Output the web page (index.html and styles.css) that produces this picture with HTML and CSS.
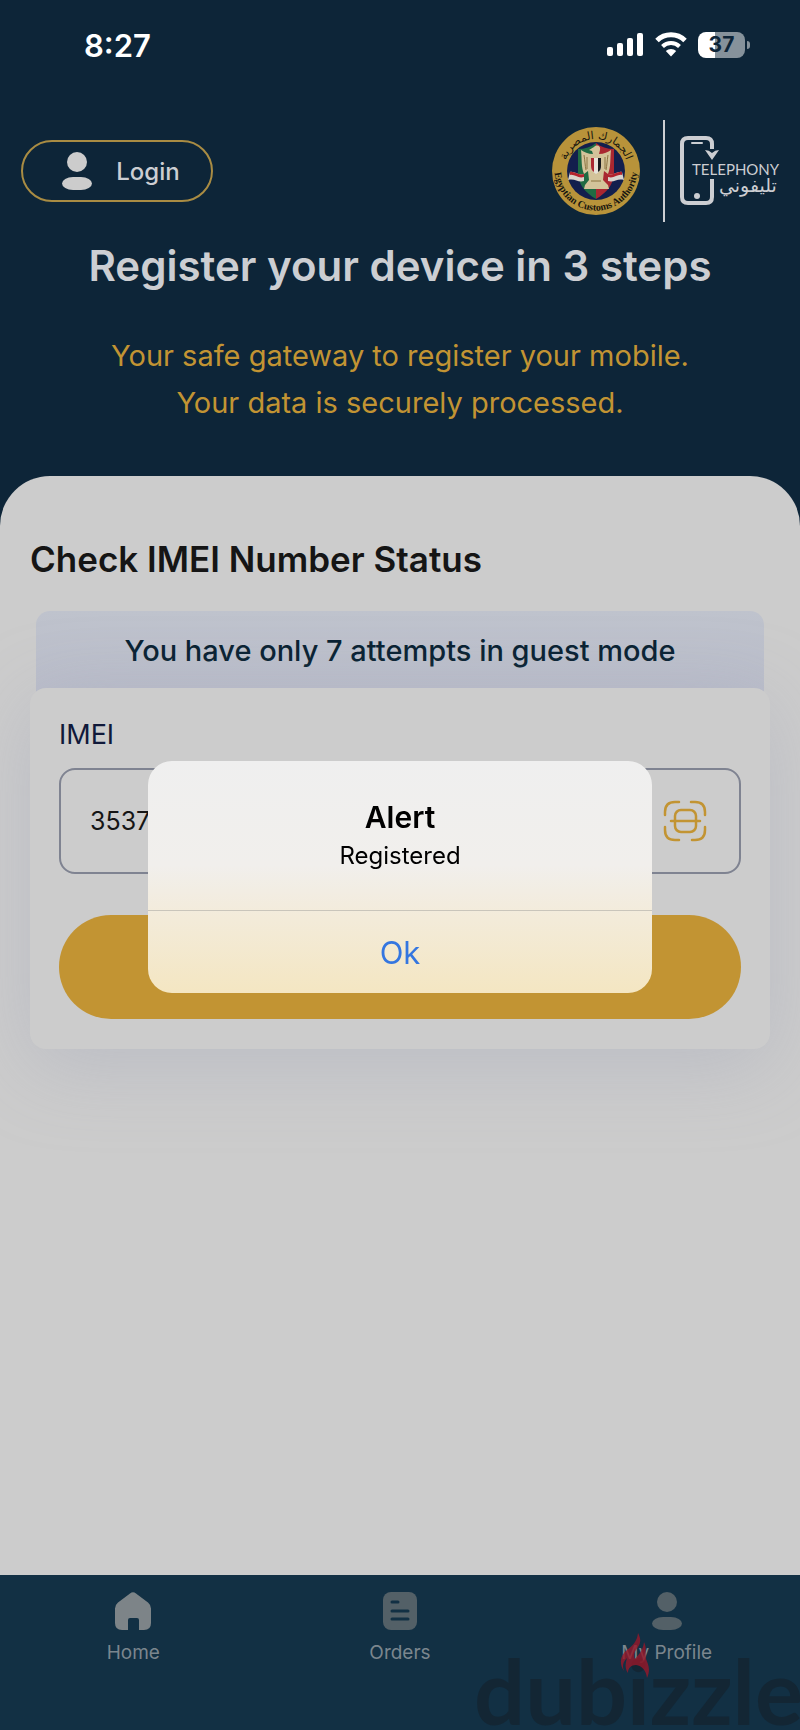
FILE: index.html
```
<!DOCTYPE html>
<html lang="en">
<head>
    <meta charset="UTF-8">
    <meta name="viewport" content="width=device-width, initial-scale=1.0">
    <title>Telephony - Check IMEI</title>
    <link rel="stylesheet" href="styles.css">
</head>
<body>
    <div class="status-bar">
        <span class="time">8:27</span>
        <div class="status-icons">
            <svg width="38" height="26" viewBox="0 0 38 26" fill="#fff" aria-hidden="true">
                <rect x="1" y="15" width="6" height="9" rx="2"/>
                <rect x="11" y="11" width="6" height="13" rx="2"/>
                <rect x="21" y="6" width="6" height="18" rx="2"/>
                <rect x="31" y="1" width="6" height="23" rx="2"/>
            </svg>
            <svg width="32" height="26" viewBox="0 0 32 26" aria-hidden="true">
                <path d="M2 8.5a20 20 0 0 1 28 0" fill="none" stroke="#fff" stroke-width="5"/>
                <path d="M7.5 14.5a12 12 0 0 1 17 0" fill="none" stroke="#fff" stroke-width="4"/>
                <path d="M10.800 19a7.500 7.500 0 0 1 10.400 0L16 24.500z" fill="#fff"/>
            </svg>
            <div class="battery"><span>37</span></div>
        </div>
    </div>

    <header class="header">
        <div class="top-row">
            <button class="login" type="button">
                <svg width="30" height="38" viewBox="0 0 30 38" fill="#ccc" aria-hidden="true">
                    <circle cx="15" cy="10" r="10"/>
                    <rect x="0" y="25" width="30" height="13" rx="11" ry="6.500"/>
                </svg>
                Login
            </button>
            <div class="logos">
                <svg class="seal" width="90" height="90" viewBox="0 0 90 90" role="img" aria-label="Egyptian Customs Authority">
                    <defs>
                        <path id="arcTop" d="M13 45a32 32 0 0 1 64 0"/>
                        <path id="arcBottom" d="M5 32A41.500 41.500 0 1 0 85 32"/>
                    </defs>
                    <circle cx="45" cy="45" r="44" fill="#b8933a"/>
                    <circle cx="45" cy="45" r="29" fill="#131f4d"/>
                    <path d="M45 17c-5 4-11 6-18 6v23c0 13 8 21 18 27z" fill="#1f6b43"/>
                    <path d="M45 17c5 4 11 6 18 6v23c0 13-8 21-18 27z" fill="#a92731"/>
                    <path d="M19 46c5-1 8 4 14 2v7c-6 2-9-3-16-1z" fill="#d9d4cc"/>
                    <path d="M71 46c-5-1-8 4-14 2v7c6 2 9-3 16-1z" fill="#d9d4cc"/>
                    <path d="M19 46c5-1 8 4 14 2v3c-6 2-9-3-14-2zM71 46c-5-1-8 4-14 2v3c6 2 9-3 14-2z" fill="#b3232d"/>
                    <path d="M43 21c3-3 7-1 6 3l-1 4c5 0 9-2 12-4-1 9 0 17-3 24l-4-3-1 9 5 5 1 4H33l1-4 4-5-1-9-4 3c-3-7-2-15-3-24 3 2 7 4 12 4l-1-3-3-1z" fill="#d3c39a"/>
                    <path d="M33 29c1 6 1 10 2 15M36 31v12M57 29c-1 6-1 10-2 15M54 31v12M40 55h10" stroke="#8b7440" fill="none"/>
                    <path d="M40 32h10v8c0 4-2 6-5 8-3-2-5-4-5-8z" fill="#e7e2da"/>
                    <path d="M40 32h3v14c-2-1-3-3-3-6z" fill="#a92731"/>
                    <path d="M47 32h3v8c0 3-1 5-3 6z" fill="#17191d"/>
                    <text class="seal-arabic"><textPath href="#arcTop" startOffset="50%" text-anchor="middle">الجمارك المصرية</textPath></text>
                    <text class="seal-latin"><textPath href="#arcBottom" startOffset="50%" text-anchor="middle">Egyptian Customs Authority</textPath></text>
                </svg>
                <span class="divider"></span>
                <svg class="telephony" width="100" height="70" viewBox="0 0 100 70" role="img" aria-label="Telephony">
                    <g fill="none" stroke="#ccced2" stroke-width="4">
                        <path d="M32 13V8q0-6-6-6H8Q2 2 2 8v53q0 6 6 6h18q6 0 6-6V43"/>
                        <path d="M12 7h10" stroke-width="2" stroke-linecap="round"/>
                    </g>
                    <path d="M25 14q4 0 7 3 3-3 7-3l-7 10z" fill="#ccced2"/>
                    <circle cx="17" cy="60" r="3" fill="#ccced2"/>
                    <text x="12" y="39" class="brand-latin">TELEPHONY</text>
                    <text x="39" y="56" class="brand-arabic">تليفوني</text>
                </svg>
            </div>
        </div>
        <h1>Register your device in 3 steps</h1>
        <p class="tagline">Your safe gateway to register your mobile.<br>Your data is securely processed.</p>
    </header>

    <main class="sheet">
        <h2>Check IMEI Number Status</h2>
        <p class="notice">You have only 7 attempts in guest mode</p>
        <form class="card">
            <label for="imei">IMEI</label>
            <div class="field">
                <input type="text" id="imei" inputmode="numeric" value="3537">
                <button class="scan" type="button" aria-label="Scan IMEI">
                    <svg width="44" height="42" viewBox="0 0 44 42" fill="none" stroke="#c29433" stroke-width="2.500" stroke-linecap="round" aria-hidden="true">
                        <path d="M2 15v-3Q2 2 12 2h4M28 2h4q10 0 10 10v3M42 27v3q0 10-10 10h-3M16 40h-4Q2 40 2 30v-3"/>
                        <rect x="12" y="10" width="21" height="22" rx="6"/>
                        <path d="M8 21h29"/>
                    </svg>
                </button>
            </div>
            <button class="submit" type="submit" aria-label="Check"></button>
        </form>
    </main>

    <nav class="tab-bar">
        <a class="tab active" href="#home">
            <svg width="36" height="38" viewBox="0 0 36 38" aria-hidden="true">
                <path d="M15 1.500q3-2.500 6 0l12 9q3 2.500 3 6V31q0 7-7 7h-5V28q0-2-2-2h-7q-2 0-2 2v10H7q-7 0-7-7V16.500q0-3.500 3-6z" fill="currentColor"/>
            </svg>
            <span>Home</span>
        </a>
        <a class="tab" href="#orders">
            <svg width="34" height="38" viewBox="0 0 34 38" aria-hidden="true">
                <rect width="34" height="38" rx="8" fill="currentColor"/>
                <path d="M9 10h6M9 19h16M9 27h16" stroke="#123044" stroke-width="3" stroke-linecap="round"/>
            </svg>
            <span>Orders</span>
        </a>
        <a class="tab" href="#profile">
            <svg width="30" height="38" viewBox="0 0 30 38" fill="currentColor" aria-hidden="true">
                <circle cx="15" cy="10" r="10"/>
                <rect x="0" y="25" width="30" height="13" rx="11" ry="6.500"/>
            </svg>
            <span>My Profile</span>
        </a>
        <div class="watermark" aria-hidden="true">
            dubizzle
            <svg class="flame" width="32" height="46" viewBox="0 0 32 46">
                <path d="M18 0c3 6 3 9 0 14-3 4-5 8-3 12 3-4 8-8 9-17 3 6 1 11 2 17 2 5 5 10 1 19-1-8-5-12-11-13-5 0-8 3-8 8C4 35 6 29 7 25c-4 4-5 8-3 13C-1 31 0 22 7 17c5-4 10-8 11-17z" fill="#98182a"/>
            </svg>
        </div>
    </nav>

    <div class="overlay">
        <div class="alert" role="alertdialog" aria-labelledby="alertTitle" aria-describedby="alertText">
            <div class="alert-body">
                <h3 id="alertTitle">Alert</h3>
                <p id="alertText">Registered</p>
            </div>
            <button class="alert-ok" type="button">Ok</button>
        </div>
    </div>
</body>
</html>
```
FILE: styles.css
```
:root {
    --navy: #0d2538;
    --nav: #123044;
    --sheet: #cccccc;
    --gold: #c29433;
    --text-light: #ccced2;
    --text-dark: #071f31;
}

* {
    box-sizing: border-box;
    margin: 0;
    padding: 0;
}

body {
    font-family: Inter, "Liberation Sans", sans-serif;
    background: var(--navy);
    color: #151515;
    min-height: 100vh;
    display: flex;
    flex-direction: column;
}

button {
    font: inherit;
    border: none;
    background: none;
}

/* Status bar */
.status-bar {
    display: flex;
    justify-content: space-between;
    align-items: center;
    height: 90px;
    padding: 0 50px 0 84px;
}

.time {
    font-size: 31px;
    font-weight: 600;
    color: #fff;
}

.status-icons {
    display: flex;
    align-items: center;
    gap: 11px;
}

.battery {
    position: relative;
    width: 47px;
    height: 26px;
    margin-right: 5px;
    border-radius: 8px;
    background: linear-gradient(to right, #fff 37%, #86929b 37%);
    color: var(--navy);
    font-size: 21px;
    font-weight: 700;
    line-height: 26px;
    text-align: center;
}

.battery::after {
    content: "";
    position: absolute;
    right: -5px;
    top: 9px;
    width: 3px;
    height: 8px;
    border-radius: 0 3px 3px 0;
    background: #86929b;
}

/* Header */
.header {
    padding: 30px 21px 50px;
    text-align: center;
}

.top-row {
    display: flex;
    justify-content: space-between;
    align-items: center;
    height: 102px;
}

.login {
    display: flex;
    align-items: center;
    justify-content: center;
    gap: 24px;
    width: 192px;
    height: 62px;
    padding-left: 8px;
    border: 2px solid #a98c43;
    border-radius: 31px;
    color: var(--text-light);
    font-size: 24px;
    font-weight: 500;
}

.logos {
    display: flex;
    align-items: center;
    gap: 15px;
}

.seal-arabic {
    font-family: "DejaVu Sans", sans-serif;
    font-size: 11px;
    fill: #17150f;
}

.seal-latin {
    font-family: "Liberation Serif", serif;
    font-size: 10px;
    font-weight: 700;
    fill: #17150f;
}

.divider {
    width: 2px;
    height: 102px;
    margin-left: 7px;
    background: var(--text-light);
}

.telephony {
    margin-right: -1px;
}

.brand-latin {
    font-family: Lato, sans-serif;
    font-size: 15px;
    fill: var(--text-light);
}

.brand-arabic {
    font-family: "DejaVu Sans", sans-serif;
    font-size: 19px;
    fill: var(--text-light);
}

h1 {
    margin-top: 20px;
    color: var(--text-light);
    font-size: 42px;
    font-weight: 600;
    line-height: 48px;
}

.tagline {
    margin-top: 42px;
    color: var(--gold);
    font-size: 29px;
    line-height: 47px;
}

/* Sheet */
.sheet {
    flex: 1;
    padding: 60px 30px;
    background: var(--sheet);
    border-radius: 50px 50px 0 0;
    overflow: hidden;
}

h2 {
    font-size: 35px;
    font-weight: 600;
    line-height: 46px;
}

.notice {
    height: 90px;
    margin: 29px 6px 0;
    border-radius: 14px 14px 0 0;
    background: linear-gradient(#bfc3cd, #b9bcc9);
    color: var(--text-dark);
    font-size: 29px;
    font-weight: 500;
    line-height: 80px;
    text-align: center;
}

.card {
    position: relative;
    display: flex;
    flex-direction: column;
    margin-top: -13px;
    padding: 30px 29px;
    border-radius: 16px;
    background: var(--sheet);
    box-shadow: 0 16px 80px rgba(160, 164, 186, 0.4);
}

label {
    color: #10193a;
    font-size: 27px;
    line-height: 34px;
}

.field {
    display: flex;
    align-items: center;
    height: 106px;
    margin-top: 16px;
    padding: 0 32px 0 29px;
    border: 2px solid #7f8391;
    border-radius: 16px;
}

.field input {
    flex: 1;
    min-width: 0;
    border: none;
    outline: none;
    background: none;
    color: #151515;
    font: inherit;
    font-size: 25px;
}

.scan {
    height: 42px;
}

.submit {
    height: 104px;
    margin-top: 41px;
    border-radius: 52px;
    background: var(--gold);
}

/* Bottom tabs */
.tab-bar {
    position: relative;
    display: grid;
    grid-template-columns: repeat(3, 1fr);
    height: 155px;
    padding-top: 17px;
    background: var(--nav);
    overflow: hidden;
}

.tab {
    display: flex;
    flex-direction: column;
    align-items: center;
    gap: 12px;
    color: #536067;
    font-size: 19px;
    line-height: 22px;
    text-decoration: none;
}

.tab span {
    color: #7b868e;
}

.tab.active {
    color: #7d8488;
}

.watermark {
    position: absolute;
    right: -3px;
    bottom: 0;
    color: rgba(20, 32, 42, 0.6);
    font-family: Lato, sans-serif;
    font-size: 90px;
    font-weight: 700;
    line-height: 80px;
}

.flame {
    position: absolute;
    left: 146px;
    top: -17px;
    opacity: 0.8;
}

/* Alert */
.overlay {
    position: fixed;
    inset: 0;
    display: grid;
    place-items: center;
    padding-top: 24px;
}

.alert {
    width: 63%;
    border-radius: 24px;
    background: linear-gradient(#efefef, #f1efec 45%, #f3ebd9 68%, #f4e6c2);
    color: #000;
    text-align: center;
    overflow: hidden;
}

.alert-body {
    padding: 36px 20px 35px;
}

h3 {
    font-size: 30px;
    font-weight: 600;
    line-height: 40px;
}

.alert-body p {
    font-size: 24px;
    line-height: 38px;
}

.alert-ok {
    width: 100%;
    height: 83px;
    border-top: 1px solid #c9c5bb;
    color: #3476e0;
    font-size: 31px;
}
```
